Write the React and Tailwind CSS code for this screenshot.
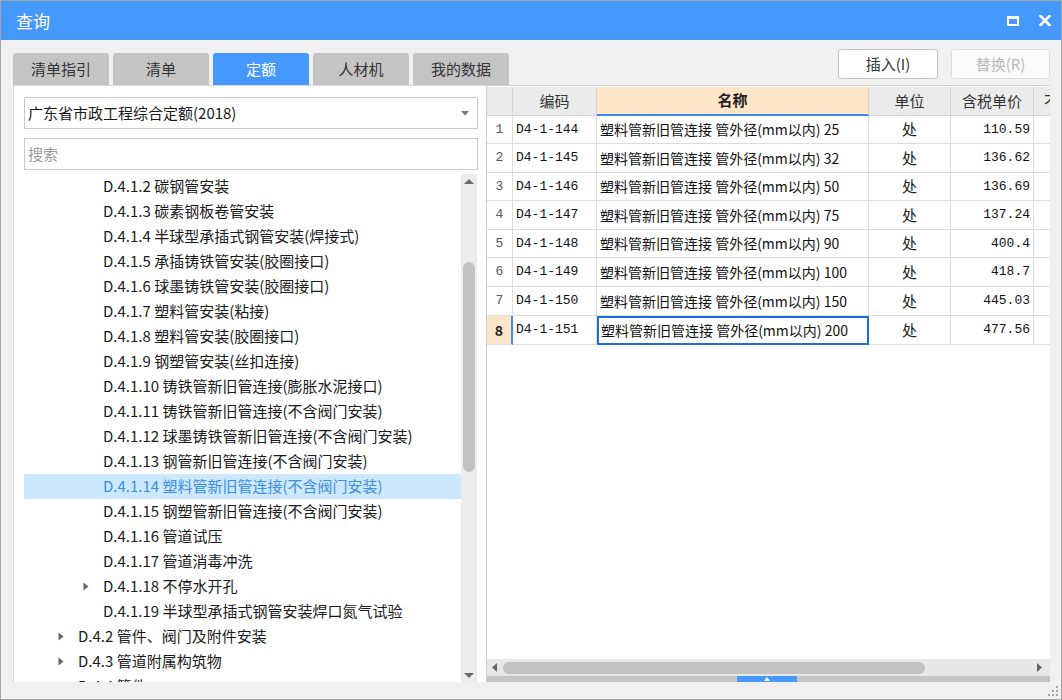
import React from "react";

const treeItems = [
  { l: 3, t: "D.4.1.2 碳钢管安装" },
  { l: 3, t: "D.4.1.3 碳素钢板卷管安装" },
  { l: 3, t: "D.4.1.4 半球型承插式钢管安装(焊接式)" },
  { l: 3, t: "D.4.1.5 承插铸铁管安装(胶圈接口)" },
  { l: 3, t: "D.4.1.6 球墨铸铁管安装(胶圈接口)" },
  { l: 3, t: "D.4.1.7 塑料管安装(粘接)" },
  { l: 3, t: "D.4.1.8 塑料管安装(胶圈接口)" },
  { l: 3, t: "D.4.1.9 钢塑管安装(丝扣连接)" },
  { l: 3, t: "D.4.1.10 铸铁管新旧管连接(膨胀水泥接口)" },
  { l: 3, t: "D.4.1.11 铸铁管新旧管连接(不含阀门安装)" },
  { l: 3, t: "D.4.1.12 球墨铸铁管新旧管连接(不含阀门安装)" },
  { l: 3, t: "D.4.1.13 钢管新旧管连接(不含阀门安装)" },
  { l: 3, t: "D.4.1.14 塑料管新旧管连接(不含阀门安装)", sel: true },
  { l: 3, t: "D.4.1.15 钢塑管新旧管连接(不含阀门安装)" },
  { l: 3, t: "D.4.1.16 管道试压" },
  { l: 3, t: "D.4.1.17 管道消毒冲洗" },
  { l: 3, t: "D.4.1.18 不停水开孔", arrow: true },
  { l: 3, t: "D.4.1.19 半球型承插式钢管安装焊口氮气试验" },
  { l: 2, t: "D.4.2 管件、阀门及附件安装", arrow: true },
  { l: 2, t: "D.4.3 管道附属构筑物", arrow: true },
  { l: 2, t: "D.4.4 管件", arrow: true },
];

const rows = [
  ["1", "D4-1-144", "25", "110.59", "h-[28px]"],
  ["2", "D4-1-145", "32", "136.62", "h-[29px]"],
  ["3", "D4-1-146", "50", "136.69", "h-[28px]"],
  ["4", "D4-1-147", "75", "137.24", "h-[29px]"],
  ["5", "D4-1-148", "90", "400.4", "h-[28px]"],
  ["6", "D4-1-149", "100", "418.7", "h-[29px]"],
  ["7", "D4-1-150", "150", "445.03", "h-[29px]"],
  ["8", "D4-1-151", "200", "477.56", "h-[29px]"],
];

function TriRight() {
  return (
    <svg width="6" height="9" viewBox="0 0 6 9">
      <path d="M0.5 0.5 L5.5 4.5 L0.5 8.5 Z" fill="#666" />
    </svg>
  );
}

export default function App() {
  return (
    <div className="w-[1062px] h-[700px] border border-[#a3a3a3] bg-[#f0f0f0] flex flex-col overflow-hidden font-['Noto_Sans_CJK_SC','Noto_Sans',sans-serif]">
      {/* Title bar */}
      <div className="h-[39px] shrink-0 bg-[#4599fd] flex items-center justify-between pl-[15px] pr-[10px] text-white">
        <span className="text-[17px] leading-none">查询</span>
        <div className="flex items-center gap-[20px]">
          <div className="w-[12px] h-[10px] border-2 border-t-[3px] border-white" />
          <svg width="12" height="11" viewBox="0 0 12 11">
            <path d="M1.5 1 L10.5 10 M10.5 1 L1.5 10" stroke="white" strokeWidth="2.6" strokeLinecap="square" />
          </svg>
        </div>
      </div>

      {/* Tabs + buttons */}
      <div className="h-[45px] shrink-0 flex justify-between pl-[12px] pr-[11px]">
        <div className="flex items-end gap-[4px]">
          {["清单指引", "清单", "定额", "人材机", "我的数据"].map((t) => (
            <div
              key={t}
              className={
                t === "定额"
                  ? "w-[96px] h-[32px] rounded-t-[3px] bg-[#4599fd] text-white flex items-center justify-center text-[15px]"
                  : "w-[96px] h-[32px] rounded-t-[3px] bg-[#c4c4c4] text-[#333] flex items-center justify-center text-[15px]"
              }
            >
              {t}
            </div>
          ))}
        </div>
        <div className="flex gap-[13px] pt-[9px]">
          <div className="w-[100px] h-[30px] border border-[#c6c6c6] rounded-[3px] bg-white flex items-center justify-center text-[15px] text-[#333]">
            插入(I)
          </div>
          <div className="w-[99px] h-[30px] border border-[#dedede] rounded-[3px] bg-[#fbfbfb] flex items-center justify-center text-[15px] text-[#b9b9b9]">
            替换(R)
          </div>
        </div>
      </div>

      {/* Main */}
      <div className="h-[597px] shrink-0 flex pl-[12px] pr-[11px]">
        {/* Left panel */}
        <div className="w-[473px] bg-white border-l border-t border-[#d8d8d8] flex flex-col pl-[10px] pr-[8px] pt-[11px]">
          <div className="h-[32px] shrink-0 border border-[#c8c8c8] flex items-center justify-between pl-[3px] pr-[8px] text-[15px] text-[#1a1a1a]">
            <span>广东省市政工程综合定额(2018)</span>
            <svg width="8" height="5" viewBox="0 0 8 5">
              <path d="M0 0 L8 0 L4 4.5 Z" fill="#777" />
            </svg>
          </div>
          <div className="h-[32px] shrink-0 mt-[9px] border border-[#c8c8c8] flex items-center pl-[3px] text-[15px] text-[#9a9a9a]">
            搜索
          </div>
          <div className="mt-[4px] flex-1 min-h-0 flex">
            <div className="flex-1 min-w-0 overflow-hidden">
              {treeItems.map((it) => (
                <div
                  key={it.t}
                  className={
                    (it.sel ? "bg-[#cce8ff] text-[#3d8de2] " : "text-[#1a1a1a] ") +
                    (it.l === 3 ? "pl-[55px] " : "pl-[30px] ") +
                    "h-[25px] flex items-center whitespace-nowrap text-[15px]"
                  }
                >
                  <div className="w-[24px] shrink-0 pl-[4px] flex items-center">
                    {it.arrow ? <TriRight /> : null}
                  </div>
                  <span>{it.t}</span>
                </div>
              ))}
            </div>
            <div className="w-[16px] mr-px shrink-0 bg-[#ececec] flex flex-col items-center pt-[5px] pb-[4px]">
              <svg width="10" height="5" viewBox="0 0 10 5">
                <path d="M0 5 L5 0 L10 5 Z" fill="#6d6d6d" />
              </svg>
              <div className="mt-[78px] w-[12px] h-[210px] rounded-full bg-[#c2c2c2]" />
              <div className="flex-1" />
              <svg width="10" height="5" viewBox="0 0 10 5">
                <path d="M0 0 L10 0 L5 5 Z" fill="#6d6d6d" />
              </svg>
            </div>
          </div>
        </div>

        {/* Right panel */}
        <div className="w-[564px] bg-white border-l border-t border-[#cfcfcf] flex flex-col pt-px">
          <div className="flex-1 min-h-0 overflow-hidden">
            {/* header */}
            <div className="flex h-[29px] w-[600px]">
              <div className="w-[26px] shrink-0 bg-[#ebebeb] border-r border-b border-[#d5d5d5]" />
              <div className="w-[84px] shrink-0 bg-[#ebebeb] border-r border-b border-[#d5d5d5] flex items-center justify-center text-[15px] text-[#333]">编码</div>
              <div className="w-[272px] shrink-0 bg-[#fde6c8] border-r border-[#d5d5d5] border-b-2 border-b-[#3b8bea] flex items-center justify-center text-[15px] font-bold text-[#222]">名称</div>
              <div className="w-[82px] shrink-0 bg-[#ebebeb] border-r border-b border-[#d5d5d5] flex items-center justify-center text-[15px] text-[#333]">单位</div>
              <div className="w-[83px] shrink-0 bg-[#ebebeb] border-r border-b border-[#d5d5d5] flex items-center justify-center text-[15px] text-[#333]">含税单价</div>
              <div className="w-[53px] shrink-0 bg-[#ebebeb] border-r border-b border-[#d5d5d5] flex items-center pl-[10px] text-[15px] text-[#333] whitespace-nowrap overflow-hidden">不含税</div>
            </div>
            {rows.map(([n, code, d, price, h]) => {
              const sel = n === "8";
              return (
                <div key={n} className={"flex w-[600px] " + h}>
                  <div
                    className={
                      sel
                        ? "w-[26px] shrink-0 bg-[#fde6c8] border-b border-[#dcdcdc] border-r-2 border-r-[#3b8bea] flex items-center justify-center font-bold text-[14px] text-[#222]"
                        : "w-[26px] shrink-0 border-r border-b border-[#dcdcdc] flex items-center justify-center text-[13px] text-[#555] font-['Liberation_Mono',monospace]"
                    }
                  >
                    {n}
                  </div>
                  <div className="w-[84px] shrink-0 border-r border-b border-[#dcdcdc] flex items-center pl-[3px] text-[13px] text-[#111] font-['Liberation_Mono',monospace]">
                    {code}
                  </div>
                  <div
                    className={
                      sel
                        ? "w-[272px] shrink-0 border-2 border-[#1b6de0] flex items-center pl-[2px] text-[14px] text-[#111] whitespace-nowrap"
                        : "w-[272px] shrink-0 border-r border-b border-[#dcdcdc] flex items-center pl-[3px] text-[14px] text-[#111] whitespace-nowrap"
                    }
                  >
                    塑料管新旧管连接 管外径(mm以内) {d}
                  </div>
                  <div className="w-[82px] shrink-0 border-r border-b border-[#dcdcdc] flex items-center justify-center text-[15px] text-[#222]">
                    处
                  </div>
                  <div className="w-[83px] shrink-0 border-r border-b border-[#dcdcdc] flex items-center justify-end pr-[3px] text-[13px] text-[#111] font-['Liberation_Mono',monospace]">
                    {price}
                  </div>
                  <div className="w-[53px] shrink-0 border-r border-b border-[#dcdcdc]" />
                </div>
              );
            })}
          </div>
          {/* horizontal scrollbar */}
          <div className="h-[17px] shrink-0 bg-[#e8e8e8] flex items-center pl-[5px] pr-[8px]">
            <svg width="5" height="9" viewBox="0 0 5 9">
              <path d="M5 0 L0 4.5 L5 9 Z" fill="#666" />
            </svg>
            <div className="ml-[6px] w-[422px] h-[12px] rounded-full bg-[#c2c2c2]" />
            <div className="flex-1" />
            <svg width="5" height="9" viewBox="0 0 5 9">
              <path d="M0 0 L5 4.5 L0 9 Z" fill="#666" />
            </svg>
          </div>
          <div className="h-[6px] shrink-0 bg-[#c6c6c6] flex justify-center pr-[4px]">
            <div className="w-[60px] h-full bg-[#4599fd] flex items-center justify-center">
              <svg width="6" height="4" viewBox="0 0 6 4">
                <path d="M0 4 L3 0 L6 4 Z" fill="white" />
              </svg>
            </div>
          </div>
        </div>
      </div>

      {/* bottom strip */}
      <div className="h-[17px] shrink-0 flex justify-end items-end pr-[3px] pb-[3px]">
        <svg width="10" height="10" viewBox="0 0 10 10">
          <rect x="8" y="0" width="2" height="2" fill="#a5a5a5" />
          <rect x="4" y="4" width="2" height="2" fill="#a5a5a5" />
          <rect x="8" y="4" width="2" height="2" fill="#a5a5a5" />
          <rect x="0" y="8" width="2" height="2" fill="#a5a5a5" />
          <rect x="4" y="8" width="2" height="2" fill="#a5a5a5" />
          <rect x="8" y="8" width="2" height="2" fill="#a5a5a5" />
        </svg>
      </div>
    </div>
  );
}
